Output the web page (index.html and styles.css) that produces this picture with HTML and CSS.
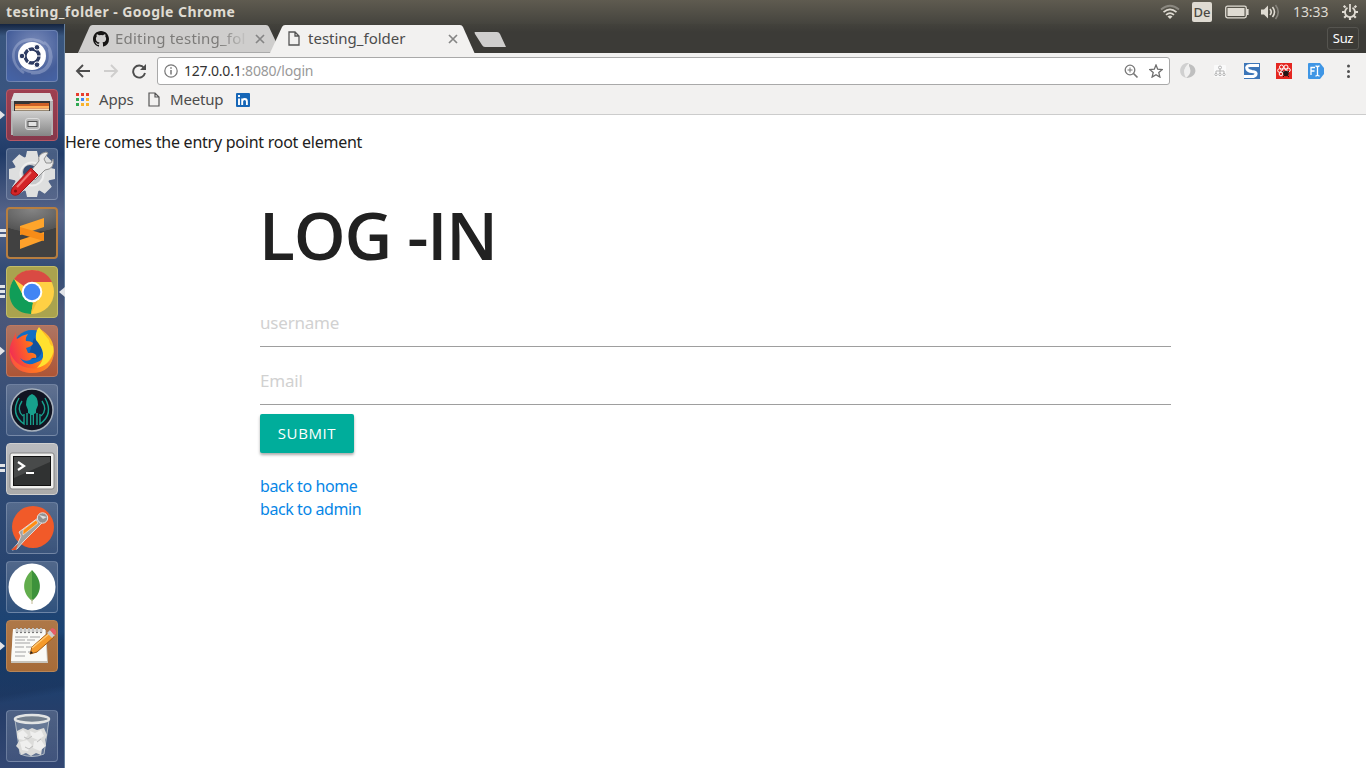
FILE: index.html
```
<!DOCTYPE html>
<html lang="en">
<head>
<meta charset="utf-8">
<title>testing_folder</title>
<link rel="stylesheet" href="styles.css">
</head>
<body>
<header class="panel">
  <span class="panel-title">testing_folder - Google Chrome</span>
  <div class="indicators">
    <svg class="wifi" width="20" height="16" viewBox="0 0 20 16" fill="none" stroke-width="1.7"><path d="M1 5.5Q10-2 19 5.5" stroke="#8b8880"/><path d="M3.5 8.2Q10 2.5 16.500 8.200M6 10.800Q10 7.300 14 10.800" stroke="#dfdbd2"/><path d="M7.500 12.500Q10 10.500 12.500 12.500L10 15Z" fill="#dfdbd2"/></svg>
    <span class="keyboard">De</span>
    <svg class="battery" width="24" height="14" viewBox="0 0 24 14"><rect x=".7" y="1.200" width="20.600" height="11.600" rx="1.800" fill="none" stroke="#dfdbd2" stroke-width="1.300"/><path d="M2.500 3h17v8h-17zM22 4h1.600v6H22z" fill="#dfdbd2"/></svg>
    <svg class="sound" width="20" height="16" viewBox="0 0 20 16"><path d="M1 5.500h3l4-4v13l-4-4H1Z" fill="#dfdbd2"/><path d="M10 5q2.500 3 0 6M12.500 3q4 5 0 10" fill="none" stroke="#dfdbd2" stroke-width="1.600"/><path d="M15.500 1q5.500 7 0 14" fill="none" stroke="#85827b" stroke-width="1.600"/></svg>
    <span class="clock">13:33</span>
    <svg class="power" width="18" height="18" viewBox="0 0 18 18" fill="none" stroke="#dfdbd2"><path d="M6.500 4.800a5 5 0 1 0 5 0M9 1v8" stroke-width="1.800"/><path d="M4.500 4.500 2.700 2.700M13.500 4.500l1.800-1.800M4 9H1M14 9h3M5.500 12.500l-2.300 2.300M12.500 12.500l2.300 2.300M9 14v3" stroke-width="2.200"/></svg>
  </div>
</header>
<div class="desktop">
  <nav class="launcher">
    <div class="tile dash"><svg viewBox="0 0 52 52"><g fill="none" stroke="#d6def2" stroke-opacity=".3" stroke-width="2.500"><path d="M8 31C4 10 25 4 39 14M18 43C0 31 6 9 26 10M43 19c5 20-11 29-28 19M25 43c22 3 26-22 13-31"/></g><circle cx="26" cy="26" r="14" fill="#fff"/><circle cx="26" cy="26" r="7" fill="none" stroke="#2d3b62" stroke-width="3.400"/><path d="m26 26-5.500-9.500M26 26l-5.500 9.500M26 26h10" stroke="#fff" stroke-width="1.200"/><circle cx="26" cy="26" r="4.800" fill="#fff"/><g fill="#2d3b62" stroke="#fff"><circle cx="16" cy="26" r="2.800"/><circle cx="31" cy="17.300" r="2.800"/><circle cx="31" cy="34.700" r="2.800"/></g></svg></div>
    <div class="tile files"><i class="mark"></i><svg viewBox="0 0 52 52"><defs><linearGradient id="steel" x2="0" y2="1"><stop stop-color="#d0d0d0"/><stop offset="1" stop-color="#858585"/></linearGradient></defs><path d="M8 4h36l3 9v33H5V13Z" fill="#b5b5b5"/><path d="M8 4h36l3 8H5Z" fill="#dedede"/><path d="M8 12h36v12H8z" fill="#353535"/><path d="M9 15h14l2-1h18v7H9z" fill="#ce6026"/><path d="M9 17h34v2H9z" fill="#ffb15b"/><path d="M9 19.500h34v2H9z" fill="#f7dab0"/><path d="M6 22h40l-1 25H7Z" fill="url(#steel)"/><rect x="19.500" y="29.500" width="14" height="11" rx="2.500" fill="#b5b5b5" stroke="#ddd"/><rect x="22" y="32.500" width="9" height="5" fill="#e2e2e2" stroke="#555"/></svg></div>
    <div class="tile settings"><svg viewBox="0 0 52 52"><g fill="#dedfdf"><circle cx="26" cy="26" r="18"/><path id="tooth" d="M21 3h10l2 9H19ZM21 49h10l2-9H19Z"/><use href="#tooth" transform="rotate(45 26 26)"/><use href="#tooth" transform="rotate(90 26 26)"/><use href="#tooth" transform="rotate(135 26 26)"/></g><circle cx="26" cy="26" r="11.500" fill="#c7c9cb" stroke="#eee" stroke-width="2"/><circle cx="24" cy="24" r="7" fill="#384d72"/><path d="m24 24 9-11q-2-7 7-9l2 1-4 6 2 4 5 0 2-4q2 10-8 11l-10 10Z" fill="#e9e9e9" stroke="#909090"/><path d="m25 20 7 7L13 46q-5 3-8-1 0-4 3-7Z" fill="#d32427" stroke="#a1181b"/><path d="M25 24 11 39" stroke="#f17975" stroke-width="2"/><circle cx="9.500" cy="43" r="1.600" fill="#811"/></svg></div>
    <div class="tile sublime"><i class="mark double"></i><svg viewBox="0 0 52 52"><path d="M14 19 38 11v9l-24 8Z" fill="#ffa52b"/><path d="m14 33 24-8v8l-24 9Z" fill="#ffa12a"/><path d="m14 20 24 7v7l-24-7Z" fill="#f78c18"/></svg></div>
    <div class="tile chrome"><i class="mark triple"></i><i class="mark active"></i><svg viewBox="0 0 52 52"><circle cx="26" cy="26" r="22" fill="#ffd044"/><path d="M26 26 8 13Q14 4 26 4q14 0 20 12H26Z" fill="#d94a43"/><path d="M8 13 18 31l8 5 1 1-2 11C3 47-1 26 8 13Z" fill="#109d58"/><path d="M27 37 35 28 25 48Z" fill="#f0bd36"/><circle cx="26" cy="26" r="10.300" fill="#fff"/><circle cx="26" cy="26" r="8.300" fill="#4285f4"/></svg></div>
    <div class="tile firefox"><i class="mark"></i><svg viewBox="0 0 52 52"><defs><linearGradient id="fire" x1="0" y1=".7" x2="1" y2=".4"><stop stop-color="#f02759"/><stop offset=".48" stop-color="#ff6b20"/><stop offset="1" stop-color="#ffc629"/></linearGradient></defs><circle cx="26" cy="24" r="19" fill="#106dc5"/><path d="M28 13q8 5 8 13-2 10-14 7l4-14Z" fill="#12529e"/><path d="M10 7q-1 5 1 7 5-4 11-5-3 4-2 7 5 0 7 2 0 3-7 5l2 5q4-1 7 1 2 1 1 4-4-1-6 2-6 2-10-2 6 9 15 5 10-2 10-14 0-9-5-14V4q14 8 14 23-2 21-22 21C7 48-2 31 7 14Z" fill="url(#fire)"/><path d="M33 2q-4 5-3 13 6 7 7 13 1 8-6 15 18-4 16-22-3 0-4-6-4-5-10-13Z" fill="#ffe12f"/><path d="M4 27q1 20 21 21 21-1 23-21-8 19-25 16Q9 41 4 27Z" fill="#ff7b28" fill-opacity=".55"/></svg></div>
    <div class="tile kraken"><svg viewBox="0 0 52 52"><circle cx="26" cy="26" r="21" fill="#111421" stroke="#a7b1bd" stroke-width="1.500"/><path d="M20 21q0-9 6-11 6 2 6 11l-2 5v3l-2 1v11h-1.300V31h-1.400v10H24V30l-2-1v-3Z" fill="#17a08d"/><g fill="none" stroke="#17a08d" stroke-width="1.400"><path d="M13 14Q4 30 18 40V30M16 17q-6 9 1 15M39 14q9 16-5 26V30M36 17q6 9-1 15M21 29v12M31 29v12"/></g></svg></div>
    <div class="tile terminal"><i class="mark double"></i><svg viewBox="0 0 52 52"><rect x="4" y="10" width="44" height="36" rx="2" fill="#f0f0ee" stroke="#858585"/><rect x="7.500" y="13.500" width="37" height="29" fill="#303232" stroke="#111"/><path d="M8 14h36v5L8 35Z" fill="#484a4a"/><path d="m12 19 6 4-6 4M20 30h8" fill="none" stroke="#fff" stroke-width="2.200"/></svg></div>
    <div class="tile postman"><svg viewBox="0 0 52 52"><circle cx="27" cy="25" r="21" fill="#f15a29"/><path d="m13 30 19-14 5 4L18 39l-7 8-5 1 6-7 3-7Z" fill="#a2a2a1" stroke="#eee" stroke-width=".8"/><path d="m17 28 13-10 2 3-15 12Z" fill="#ff8d14" stroke="#fff" stroke-width=".5"/><circle cx="36.500" cy="16" r="5.200" fill="#929292" stroke="#e5e5e5"/><path d="m33 13 8 2-4 2Z" fill="#ddd"/><path d="m5 48 7-6-2 6Z" fill="#e8532b"/></svg></div>
    <div class="tile mongo"><svg viewBox="0 0 52 52"><circle cx="26" cy="26" r="23.500" fill="#fff"/><path d="M26 9c-10 10-11 22 0 31Z" fill="#62ad4d"/><path d="M26 9c10 10 11 22 0 31Z" fill="#3d923b"/><path d="M26 38v5" stroke="#c2b994"/></svg></div>
    <div class="tile notes"><i class="mark"></i><svg viewBox="0 0 52 52"><path d="M7 10h33l2 33H5Z" fill="#c8c4bb"/><path d="M7 9h32l2 32H5Z" fill="#fafaf7"/><g fill="none" stroke="#999" stroke-width=".9"><path d="M9 17h13m2 0h10M9 20h10m2 0h8M9 23h15M9 27h9m2 0h9M9 32h11m2 0h9M9 36h10"/></g><path d="M11 9v3m4-3v3m4-3v3m4-3v3m4-3v3m4-3v3m4-3v3" stroke="#777" stroke-width="2.400" stroke-linecap="round"/><path d="M11 8v4m4-4v4m4-4v4m4-4v4m4-4v4m4-4v4m4-4v4" stroke="#eee" stroke-width="1.300"/><path d="m24 34 2-7 17-15 5 5-17 15Z" fill="#f49a2b" stroke="#a65c12"/><path d="m26 28 18-15" stroke="#ffcb75" stroke-width="1.500"/><path d="m41 13 3-3 5 5-3 3Z" fill="#ccc"/><path d="m44 10 2-2q5 1 4 6l-2 1Z" fill="#e65d67"/><path d="m24 34 1-3 2 2Z" fill="#222"/></svg></div>
    <div class="tile trash"><svg viewBox="0 0 52 52"><path d="M9 10h34l-5 34q-12 5-24 0Z" fill="#9fadb9" fill-opacity=".35" stroke="#aeb8c2"/><path d="m11 21 6-3 5 2 4-2 5 2 7-2 3 7-2 5 1 6-4 3-1 6-5-2-5 3-5-3-5 2-2-6-3-3 3-5-2-4Z" fill="#dcdcda"/><path d="m12 23 5-3 5 5-4 5-5-1ZM24 21l5 2 6-3 3 6-6 4-7-3ZM14 32l7-2 5 5-4 6-6-1ZM28 31l7-1 4 6-5 5-7-3Z" fill="#efefee"/><path d="m18 27 4 2 4-3m5 6 4-3M19 37l4 2 4-3" fill="none" stroke="#bdbdbd"/><ellipse cx="26" cy="9" rx="17" ry="4" fill="#74808e" stroke="#e2e4e4" stroke-width="2.600"/></svg></div>
  </nav>
  <main class="browser">
    <div class="tabs">
      <svg class="tab-shapes" width="450" height="29" viewBox="0 0 450 29"><path d="M13 29 24.500 3q1-2 3-2H201q2 0 3 2l7 15-5 11Z" fill="#cfcecd"/><path d="M13 28.500h193" stroke="#aaa"/><path d="M205 29 217 3q1-2 3-2h175q2 0 3 2l11.500 26Z" fill="#f2f1f0"/><path d="M410 8h22q2 0 3 2l6 13h-21q-2 0-3-2l-7-11q-1-2 0-2Z" fill="#cfcecd"/></svg>
      <div class="tab inactive"><svg width="16" height="16" viewBox="0 0 16 16"><path fill="#161514" d="M8 0C3.580 0 0 3.580 0 8c0 3.540 2.290 6.530 5.470 7.590.4.070.55-.17.55-.38v-1.340c-2.230.48-2.700-1.070-2.700-1.070-.36-.92-.89-1.170-.89-1.170-.73-.5.060-.49.060-.49.800.060 1.230.83 1.230.83.710 1.210 1.870.86 2.330.66.070-.52.280-.86.500-1.060-1.780-.2-3.640-.89-3.640-3.950 0-.87.310-1.590.82-2.150-.08-.2-.36-1.020.080-2.120 0 0 .67-.21 2.200.82a7.600 7.600 0 0 1 4 0c1.530-1.040 2.200-.82 2.200-.82.440 1.100.160 1.920.080 2.120.51.560.82 1.270.82 2.150 0 3.070-1.870 3.750-3.650 3.950.29.250.54.730.54 1.480v2.160c0 .21.150.46.550.38A8 8 0 0 0 16 8c0-4.420-3.580-8-8-8"/></svg><span class="tab-label fade">Editing testing_fol</span><svg class="close" width="10" height="10" viewBox="0 0 10 10"><path d="m1 1 8 8M9 1 1 9"/></svg></div>
      <div class="tab current"><svg width="12" height="16" viewBox="0 0 12 16"><path d="M1 1h6l4 4v9H1ZM7 1v4h4" fill="none" stroke="#555" stroke-width="1.300"/></svg><span class="tab-label">testing_folder</span><svg class="close" width="10" height="10" viewBox="0 0 10 10"><path d="m1 1 8 8M9 1 1 9"/></svg></div>
      <span class="profile">Suz</span>
    </div>
    <div class="toolbar">
      <div class="navigation">
        <svg width="16" height="16" viewBox="0 0 16 16"><path d="M15 8H2m6-6L2 8l6 6" fill="none" stroke="#4d4d4d" stroke-width="1.900"/></svg>
        <svg width="16" height="16" viewBox="0 0 16 16"><path d="M1 8h13M8 2l6 6-6 6" fill="none" stroke="#cfcecd" stroke-width="1.900"/></svg>
        <svg width="16" height="16" viewBox="0 0 16 16"><path d="M13 5A6 6 0 1 0 14 10" fill="none" stroke="#4d4d4d" stroke-width="1.900"/><path d="M15 1v6H9Z" fill="#4d4d4d"/></svg>
      </div>
      <div class="address"><svg width="14" height="14" viewBox="0 0 14 14" fill="none" stroke="#777" stroke-width="1.200"><circle cx="7" cy="7" r="6.200"/><path d="M7 6v4.500M7 3.200v1.500" stroke-width="1.500"/></svg><span class="url"><b>127.0.0.1</b>:8080/login</span><svg class="magnifier" width="15" height="15" viewBox="0 0 15 15" fill="none" stroke="#777"><circle cx="6" cy="6" r="4.800" stroke-width="1.300"/><path d="m9.500 9.500 4 4" stroke-width="1.700"/><path d="M3.500 6h5M6 3.500v5"/></svg><svg width="14" height="14" viewBox="0 0 14 14"><path d="m7 1 1.700 4.200 4.600.4-3.500 3 1.100 4.500L7 10.700l-3.900 2.400 1.100-4.500-3.500-3 4.600-.4Z" fill="none" stroke="#6d6d6d" stroke-width="1.300"/></svg></div>
      <div class="extensions">
        <svg width="16" height="16" viewBox="0 0 16 16"><path d="M9 0C0-1-3 11 4 14l2 1Q1 7 9 0Z" fill="#d0d0d0"/><path d="M9 1c9 2 9 13-3 14q7-5 3-12Z" fill="#bfbfbf"/><path d="M6 4q-3 4 0 8 5-3 3-8Z" fill="#f0f0f0"/></svg>
        <svg width="16" height="16" viewBox="0 0 16 16"><rect x="2" y="2" width="12" height="12" rx="1" fill="#fafafa"/><path d="M8 5v6M4 11V8h8v3" fill="none" stroke="#b5b5b5"/><g fill="#fafafa" stroke="#b5b5b5"><circle cx="8" cy="4.500" r="1.500"/><circle cx="4" cy="11.500" r="1.200"/><circle cx="8" cy="11.500" r="1.200"/><circle cx="12" cy="11.500" r="1.200"/></g></svg>
        <svg width="16" height="16" viewBox="0 0 16 16"><path d="M0 0h16v16H0z" fill="#3d76b8"/><path d="M15 2.500H6Q1.500 3 3 6q1 2 5 2.500 5 .5 4 3-1 2-4 2H0" fill="none" stroke="#fff" stroke-width="3"/></svg>
        <svg width="16" height="16" viewBox="0 0 16 16"><path d="M0 0h16v16H0z" fill="#e52620"/><g fill="none" stroke="#fff" stroke-width="1"><circle cx="5.500" cy="4" r="2"/><circle cx="10" cy="4" r="2"/><circle cx="3.500" cy="7.500" r="1.800"/><circle cx="12.500" cy="7" r="1.800"/><circle cx="5" cy="11" r="1.800"/><circle cx="8" cy="7.500" r="1.800"/></g><circle cx="10" cy="10.500" r="2.700" fill="#241716"/><path d="m6 8 7 6M13 8l-6 6" stroke="#241716"/></svg>
        <svg width="16" height="16" viewBox="0 0 16 16"><path d="M1 0h11l4 5v6l-4 5H1q-1 0-1-1V1q0-1 1-1Z" fill="#3f96e5"/><path d="M3 12V4.500h4M3 8h3.500M7.500 3q2 0 2 1.500v7q0 1.500-2 1.500M11.500 3q-2 0-2 1.500m2 8.500q-2 0-2-1.500" fill="none" stroke="#fff" stroke-width="1.300"/></svg>
        <svg width="16" height="16" viewBox="0 0 16 16" fill="#505050"><circle cx="8.500" cy="3" r="1.500"/><circle cx="8.500" cy="8.500" r="1.500"/><circle cx="8.500" cy="13.500" r="1.500"/></svg>
      </div>
    </div>
    <div class="bookmarks">
      <svg width="13" height="13" viewBox="0 0 13 13"><path d="M0 0h3v3H0zM5 0h3v3H5zM10 0h3v3h-3z" fill="#e83e2f"/><path d="M0 5h3v3H0zM0 10h3v3H0z" fill="#30a852"/><path d="M5 5h3v3H5z" fill="#4285f4"/><path d="M10 5h3v3h-3zM5 10h3v3H5zM10 10h3v3h-3z" fill="#f9b32c"/></svg><span class="apps">Apps</span>
      <svg width="12" height="16" viewBox="0 0 12 16"><path d="M1 1h6l4 4v9H1ZM7 1v4h4" fill="none" stroke="#555" stroke-width="1.200"/></svg><span class="meetup">Meetup</span>
      <svg width="14" height="14" viewBox="0 0 14 14"><rect width="14" height="14" rx="1" fill="#1666b7"/><path d="M3 5.500V12M3 2v2M6.200 12V5.500M6.200 8.500q0-2.500 2.500-2.500 2.200 0 2.200 2.500V12" fill="none" stroke="#fff" stroke-width="1.900"/></svg>
    </div>
    <section class="page">
      <p class="intro">Here comes the entry point root element</p>
      <div class="container">
        <h1>LOG -IN</h1>
        <form>
          <input type="text" class="username" placeholder="username">
          <input type="text" class="email" placeholder="Email">
          <button type="button">SUBMIT</button>
        </form>
        <div class="links"><a class="home" href="#">back to home</a><a class="admin" href="#">back to admin</a></div>
      </div>
    </section>
  </main>
</div>
</body>
</html>
```
FILE: styles.css
```
* { box-sizing: border-box; }
body { margin: 0; width: 1366px; height: 768px; overflow: hidden; font-family: "Noto Sans", "Open Sans", sans-serif; color: #212121; background: #fff; }
svg { display: block; flex: none; }
span, a { white-space: nowrap; }
.panel { height: 24px; display: flex; align-items: center; justify-content: space-between; padding: 0 7px 0 6px; background: linear-gradient(#5f5b50, #45443e); color: #dfdbd2; }
.panel-title { font-size: 14px; line-height: 20px; font-weight: 700; letter-spacing: .43px; }
.indicators { display: flex; align-items: center; }
.keyboard { width: 20px; height: 20px; margin: 0 13px 0 12px; border-radius: 2px; background: #dfdbd2; color: #4b4943; font-size: 13px; font-weight: 500; line-height: 20px; text-align: center; }
.sound { margin-left: 11px; }
.clock { font-size: 14px; width: 36px; margin: -1px 12px 0 13px; letter-spacing: -.1px; }
.desktop { height: 744px; display: flex; }
.launcher { width: 65px; flex: none; display: flex; flex-direction: column; gap: 7px; padding: 6px 0 6px 6px; border-right: 1px solid #66809e; background: linear-gradient(170deg, transparent 0 82%, #172d5266 83% 89%, transparent 90%), linear-gradient(#142440, #38557e 12px, #3a5580 70px, #203b68 130px, #566489 190px, #344c75 245px, #4b5779 290px, #334d76 400px, #294570 540px, #164375 630px, #263e69 690px, #334773); }
.tile { width: 52px; height: 52px; flex: none; position: relative; border: 1px solid #a5b5cd66; border-radius: 4px; background: linear-gradient(#ffffff30, #ffffff14); }
.tile > svg { width: 52px; height: 52px; margin: -1px; }
.dash { background: radial-gradient(circle at 55% 30%, #7d8ebb, #455e9a 65%, #4564a8); }
.files { background: linear-gradient(#9e3f50, #86384b); border-color: #b75966; }
.sublime { background: radial-gradient(ellipse 42px 23px at 50% 0, #858585, #555 98%, #414141 100%); border: 2px solid #b77e40; }
.sublime > svg { margin: -2px; }
.chrome { background: #aaa34e; border-color: #c3bd68; }
.firefox { background: linear-gradient(#ae7563, #ad5536); border-color: #bf7960; }
.terminal { background: linear-gradient(#b9bbbf, #aaa); border-color: #cfcfcf; }
.notes { background: linear-gradient(#ae7848, #a66b38); border-color: #b88557; }
.trash { margin-top: auto; }
.mark { position: absolute; left: -8px; top: 20px; width: 6px; height: 10px; background: #e2e4e8; clip-path: polygon(0 0, 100% 50%, 0 100%); }
.double, .triple { left: -8px; width: 6px; clip-path: none; background: linear-gradient(#e2e4e8 0 3px, transparent 3px 5px, #e2e4e8 5px 8px, transparent 8px); }
.triple { height: 13px; top: 18px; background: linear-gradient(#e2e4e8 0 3px, transparent 3px 5px, #e2e4e8 5px 8px, transparent 8px 10px, #e2e4e8 10px); }
.active { left: 52px; width: 6px; clip-path: polygon(100% 0, 0 50%, 100% 100%); }
.browser { width: 1301px; display: flex; flex-direction: column; }
.tabs { height: 29px; flex: none; position: relative; display: flex; align-items: center; padding: 0 7px 0 28px; background: linear-gradient(#43423c, #3c3b37 8px); }
.tab-shapes { position: absolute; left: 0; top: 0; }
.tab { position: relative; height: 29px; display: flex; align-items: center; color: #4c4c4c; font-size: 15px; }
.inactive { width: 172px; color: #7c7b79; }
.tab-label { line-height: 20px; margin-top: -2px; letter-spacing: 0; }
.fade { width: 134px; margin-left: 6px; letter-spacing: .2px; -webkit-mask-image: linear-gradient(90deg, #000 78%, transparent); mask-image: linear-gradient(90deg, #000 78%, transparent); }
.close { margin-left: auto; fill: none; stroke: #858585; stroke-width: 1.700; }
.current { margin-left: 23px; width: 170px; }
.current .tab-label { margin-left: 8px; }
.profile { margin-left: auto; width: 32px; height: 23px; border: 1px solid #55544f; border-radius: 3px; color: #fff; font-size: 13px; line-height: 21px; text-align: center; letter-spacing: -.3px; }
.toolbar { height: 36px; flex: none; display: flex; align-items: center; padding-left: 10px; background: #f2f1f0; }
.navigation { display: flex; gap: 12px; }
.address { width: 1013px; height: 28px; margin-left: 10px; display: flex; align-items: center; padding: 0 6px; border: 1px solid #a9a9a9; border-radius: 3px; background: #fff; }
.url { margin: -2px 0 0 6px; color: #999; font-size: 14px; letter-spacing: -.2px; }
.url b { color: #333; font-weight: 400; }
.magnifier { margin: 0 10px 0 auto; }
.extensions { display: flex; gap: 16px; margin-left: 10px; }
.bookmarks { height: 26px; flex: none; display: flex; align-items: center; padding: 0 0 4px 11px; border-bottom: 1px solid #ccc; background: #f2f1f0; color: #4c4c4c; font-size: 15px; }
.bookmarks span { line-height: 20px; margin-top: -1px; letter-spacing: -.2px; }
.bookmarks .apps { width: 49px; margin-left: 10px; }
.bookmarks .meetup { width: 56px; margin-left: 10px; margin-right: 10px; }
.page { flex: 1; background: #fff; }
.intro { margin: 0; padding-top: 15px; line-height: 24px; font-size: 16px; letter-spacing: -.25px; }
.container { width: 911px; margin-left: 195px; }
h1 { margin: 43px 0 28px -1px; font-family: "Open Sans", sans-serif; font-size: 66px; line-height: 74px; font-weight: 600; letter-spacing: -1.15px; }
form { display: flex; flex-direction: column; align-items: flex-start; }
input { width: 100%; height: 48px; margin: 0 0 10px; padding: 0; border: 0; border-bottom: 1px solid #9e9e9e; outline: 0; background: transparent; font: 17px "Noto Sans", sans-serif; letter-spacing: -.2px; }
input::placeholder { color: #d1d1d1; opacity: 1; }
button { width: 94px; height: 39px; margin-top: -1px; padding: 0 0 1px; border: 0; border-radius: 2px; background: #00ad9b; color: #fff; font: 15px "Open Sans", sans-serif; letter-spacing: .6px; box-shadow: 0 2px 3px #0005; }
.links { display: flex; flex-direction: column; align-items: flex-start; padding-top: 22px; }
.links a { color: #0786e6; line-height: 23px; font-size: 16px; letter-spacing: -.42px; text-decoration: none; }
```
